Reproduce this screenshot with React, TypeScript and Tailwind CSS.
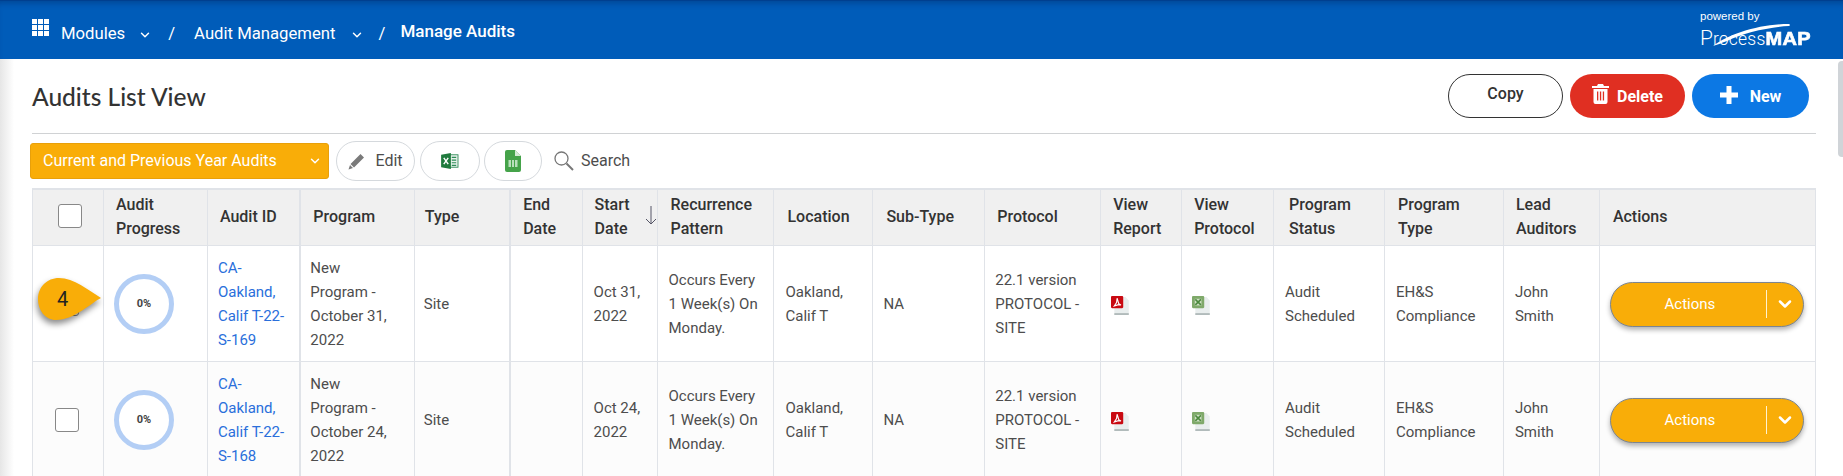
import { ChevronDown } from 'lucide-react'

const columns = [
  { label: <>&nbsp;</>, width: 71, cls: 'pl-3' },
  { label: <>Audit<br />Progress</>, width: 104, cls: 'pl-3' },
  { label: 'Audit ID', width: 93, cls: 'pl-3' },
  { label: 'Program', width: 114, cls: 'pl-3 border-l-2' },
  { label: 'Type', width: 96, cls: 'pl-[10px]' },
  { label: <>End<br />Date</>, width: 72, cls: 'pl-3 border-l-2' },
  { label: <>Start<br />Date</>, width: 75, cls: 'pl-3' },
  { label: <>Recurrence<br />Pattern</>, width: 117, cls: 'pl-[13px]' },
  { label: 'Location', width: 99, cls: 'pl-[13px]' },
  { label: 'Sub-Type', width: 112, cls: 'pl-[13px]' },
  { label: 'Protocol', width: 116, cls: 'pl-3' },
  { label: <>View<br />Report</>, width: 81, cls: 'pl-3' },
  { label: <>View<br />Protocol</>, width: 92, cls: 'pl-3' },
  { label: <>Program<br />Status</>, width: 111, cls: 'pl-[15px]' },
  { label: <>Program<br />Type</>, width: 119, cls: 'pl-[13px]' },
  { label: <>Lead<br />Auditors</>, width: 96, cls: 'pl-3' },
  { label: 'Actions', width: 216, cls: 'pl-[13px]' },
]

const audits = [
  { id: 'S-169', month: 'October 31,', start: 'Oct 31,', bg: 'bg-white' },
  { id: 'S-168', month: 'October 24,', start: 'Oct 24,', bg: 'bg-[#fcfcfc]' },
]

function FileIcon({ type }: { type: 'pdf' | 'xls' }) {
  return (
    <svg width="20" height="20" viewBox="0 0 18 18" className="translate-y-[2px]">
      <path d="M3 1h10l3 3v13H3z" fill="#e9eeee" />
      <rect x="3" y="15.500" width="13" height="1.500" fill="#aab4b4" />
      {type === 'pdf' ? (
        <>
          <rect x="0" y="0" width="11" height="11" rx="1" fill="#c90a12" />
          <path d="M5.500 2 7 7l2 1H6L3 9l2-3z" fill="none" stroke="#fff" strokeWidth="1" />
        </>
      ) : (
        <>
          <rect x="0" y="0" width="11" height="11" rx="1" fill="#7fa96a" />
          <rect x="2.500" y="2.500" width="6" height="6" fill="#cfe0c4" />
          <path d="M3 3l5 5M8 3 3 8" stroke="#4d8a3f" strokeWidth="1.400" />
        </>
      )}
    </svg>
  )
}

function Progress() {
  return (
    <div className="flex h-[60px] w-[60px] items-center justify-center rounded-full border-[5px] border-[#b3cef5] bg-white text-[11px] font-bold text-[#444]">
      0%
    </div>
  )
}

function ActionsButton() {
  return (
    <div className="flex h-[45px] w-[194px] items-center rounded-full border border-[#7c8590] bg-[#f9ad08] text-[15px] text-white shadow-[0_3px_5px_rgba(0,0,0,0.3)]">
      <span className="flex-1 pl-[3px] text-center">Actions</span>
      <span className="h-[28px] w-px bg-[#fff3d0]" />
      <span className="flex w-[36px] justify-center">
        <ChevronDown size={20} strokeWidth={3} />
      </span>
    </div>
  )
}

export default function App() {
  return (
    <div className="relative h-[476px] overflow-hidden bg-white font-['Roboto',sans-serif] text-[15px] text-[#4d4d4d]">
      {/* Top bar */}
      <header className="flex h-[59px] items-center justify-between border-t border-[#003f8f] bg-[#005cb9] pl-8 pr-[33px] text-white shadow-[inset_0_6px_6px_-4px_rgba(0,40,100,0.45)]">
        <nav className="mt-[7px] flex items-center text-[16.700px]">
          <svg width="17" height="17" viewBox="0 0 17 17" fill="#fff" className="mr-3 -translate-y-[6px]">
            <rect x="0" y="0" width="5" height="5" />
            <rect x="6" y="0" width="5" height="5" />
            <rect x="12" y="0" width="5" height="5" />
            <rect x="0" y="6" width="5" height="5" />
            <rect x="6" y="6" width="5" height="5" />
            <rect x="12" y="6" width="5" height="5" />
            <rect x="0" y="12" width="5" height="5" />
            <rect x="6" y="12" width="5" height="5" />
            <rect x="12" y="12" width="5" height="5" />
          </svg>
          <span>Modules</span>
          <ChevronDown size={14} strokeWidth={2.5} className="ml-[13px] mt-[3px]" />
          <span className="ml-[16px]">/</span>
          <span className="ml-[19px]">Audit Management</span>
          <ChevronDown size={14} strokeWidth={2.5} className="ml-[14px] mt-[3px]" />
          <span className="ml-[15px]">/</span>
          <span className="ml-[15px] -translate-y-[2px] text-[17px] font-medium">Manage Audits</span>
        </nav>
        <div className="relative h-[42px] w-[110px] pt-[2px] font-['Liberation_Sans',sans-serif] leading-none">
          <div className="text-[11.500px]">powered by</div>
          <svg width="78" height="24" viewBox="0 0 78 24" className="absolute left-[13px] top-[14px]">
            <path d="M0 23C16 11 46 1 76 1 77 1 77 3 76 3 56 4 30 10 14 18 8 20 4 22 0 23z" fill="#fff" />
          </svg>
          <div className="absolute left-0 top-[19px] flex items-baseline">
            <span className="font-['Roboto',sans-serif] text-[21px] font-light">P</span>
            <span className="font-['Roboto',sans-serif] text-[17.500px] font-light tracking-[0.2px]">rocess</span>
            <span className="origin-bottom scale-y-[0.9] text-[20px] font-bold tracking-[0.3px] [-webkit-text-stroke:0.7px_#fff]">MAP</span>
          </div>
        </div>
      </header>

      <main className="pl-8 pr-[27px]">
        {/* Title row */}
        <div className="flex h-[75px] items-center justify-between border-b border-[#d0d2d4] pb-[1px] pr-[7px]">
          <h1 className="translate-y-[2px] font-['Lato',sans-serif] text-[24.500px] font-medium text-[#333]">Audits List View</h1>
          <div className="flex gap-[7px]">
            <button className="h-[44px] w-[115px] rounded-full border border-[#333] bg-white pb-1 text-[16px] font-medium text-[#333]">Copy</button>
            <button className="flex h-[44px] w-[115px] items-center justify-center gap-2 rounded-full bg-[#e02f22] text-[16px] font-bold text-white">
              <svg width="17" height="20" viewBox="0 0 17 20" fill="#fff" className="-translate-y-[2px]">
                <path d="M6 0h5l1 2h5v2H0V2h5zM1.500 5h14v13a2 2 0 0 1-2 2h-10a2 2 0 0 1-2-2zM5 7.500v9h1.300v-9zm2.900 0v9h1.300v-9zm2.900 0v9h1.300v-9z" fillRule="evenodd" />
              </svg>
              <span className="translate-y-px">Delete</span>
            </button>
            <button className="flex h-[44px] w-[117px] items-center justify-center gap-[12px] rounded-full bg-[#0c78e4] text-[16px] font-bold text-white">
              <svg width="18" height="18" viewBox="0 0 18 18" fill="#fff" className="-translate-y-[1px]">
                <path d="M6.500 0h5v6.500H18v5h-6.500V18h-5v-6.500H0v-5h6.500z" />
              </svg>
              <span className="translate-y-px">New</span>
            </button>
          </div>
        </div>

        {/* Toolbar */}
        <div className="-ml-[2px] flex h-[54px] items-center">
          <div className="flex h-[36px] w-[299px] items-center justify-between rounded-[3px] border border-[#e8a00a] bg-[#f9ad08] pl-3 pr-[6px] text-[16px] text-white">
            <span>Current and Previous Year Audits</span>
            <ChevronDown size={14} strokeWidth={2.5} />
          </div>
          <button className="ml-[7px] flex h-[40px] w-[79px] items-center justify-center gap-[10px] rounded-full border border-[#d5d9dd] bg-white text-[16px] text-[#4d4d4d]">
            <svg width="17" height="17" viewBox="0 0 17 17" fill="#7a7a7a">
              <path d="M12.500 1 16 4.500 6 14.500 2.500 11zM2 12l3 3-4.500 1.500z" />
            </svg>
            Edit
          </button>
          <button className="ml-[5px] flex h-[40px] w-[60px] items-center justify-center rounded-full border border-[#d5d9dd] bg-white">
            <svg width="18" height="16" viewBox="0 0 20 18">
              <rect x="7" y="2" width="12" height="14" fill="#e9f3ec" stroke="#2e8b57" />
              <path d="M12 5h5M12 8h5M12 11h5M12 14h5" stroke="#2e8b57" strokeWidth="1.300" />
              <path d="M0 2 11 0v18L0 16z" fill="#1f7a3d" />
              <path d="M3 5.500 8 12.500M8 5.500 3 12.500" stroke="#fff" strokeWidth="1.600" />
            </svg>
          </button>
          <button className="ml-[4px] flex h-[40px] w-[58px] items-center justify-center rounded-full border border-[#d5d9dd] bg-white">
            <svg width="16" height="22" viewBox="0 0 16 22">
              <path d="M0 2a2 2 0 0 1 2-2h8l6 6v14a2 2 0 0 1-2 2H2a2 2 0 0 1-2-2z" fill="#45a34a" />
              <path d="M10 0l6 6h-6z" fill="#d5ead6" />
              <rect x="3.500" y="10" width="9" height="7" fill="#b9dfbc" />
              <path d="M6.500 10v7M9.500 10v7" stroke="#45a34a" />
            </svg>
          </button>
          <svg width="20" height="20" viewBox="0 0 20 20" fill="none" stroke="#777" className="ml-[12px]">
            <circle cx="7.500" cy="7.500" r="6.500" strokeWidth="1.300" />
            <path d="M12.500 12.500 19 19" strokeWidth="2" />
          </svg>
          <span className="ml-[7px] text-[16px]">Search</span>
        </div>

        {/* Audits table */}
        <table className="table-fixed border-collapse border-t-2 border-[#e0e3e8] text-left">
          <colgroup>
            {columns.map((column, i) => (
              <col key={i} style={{ width: column.width }} />
            ))}
          </colgroup>
          <thead>
            <tr className="h-[56px] bg-[#f0f0f0] text-[16px] leading-6 text-[#333]">
              {columns.map((column, i) => (
                <th key={i} className={`relative border border-[#e0e3e8] pr-1 font-medium ${column.cls}`}>
                  {i === 0 ? (
                    <span className="ml-[13px] block h-6 w-6 -translate-y-px rounded-[3px] border border-[#888] bg-white" />
                  ) : (
                    column.label
                  )}
                  {i === 6 && (
                    <svg width="12" height="19" viewBox="0 0 12 19" fill="none" stroke="#556" className="absolute right-0 top-[16px]">
                      <path d="M6 0v18M1 13l5 5 5-5" />
                    </svg>
                  )}
                </th>
              ))}
            </tr>
          </thead>
          <tbody className="leading-6">
            {audits.map((audit, row) => (
              <tr key={audit.id} className={`h-[116px] ${audit.bg} [&>td]:pt-[2px]`}>
                <td className="relative border border-[#e0e3e8] px-3">
                  <span className="ml-[10px] block h-6 w-6 rounded-[3px] border border-[#888] bg-white" />
                  {row === 0 && (
                    <div className="absolute left-[5px] top-[32px] h-[42px] w-[64px]">
                      <svg width="72" height="52" viewBox="0 0 72 52" className="absolute left-0 top-0 drop-shadow-[-1px_4px_3px_rgba(0,0,0,0.45)]">
                        <path d="M21 0C36 0 50 12 63 20 54 24 37 42 18 42 7 42 0 32 0 21 0 9 9 0 21 0z" fill="#f9ad08" />
                      </svg>
                      <span className="absolute left-[19px] top-[9px] text-[20px] leading-6 text-[#222]">4</span>
                    </div>
                  )}
                </td>
                <td className="border border-[#e0e3e8] pl-[10px]"><Progress /></td>
                <td className="border border-[#e0e3e8] pl-[10px] pr-1 text-[#2a6fdb]">CA-<br />Oakland,<br />Calif T-22-<br />{audit.id}</td>
                <td className="border border-l-2 border-[#e0e3e8] pl-[9px] pr-1">New<br />Program -<br />{audit.month}<br />2022</td>
                <td className="border border-[#e0e3e8] pl-[9px]">Site</td>
                <td className="border border-l-2 border-[#e0e3e8]" />
                <td className="border border-[#e0e3e8] pl-[11px]">{audit.start}<br />2022</td>
                <td className="border border-[#e0e3e8] pl-[11px] pr-1">Occurs Every<br />1 Week(s) On<br />Monday.</td>
                <td className="border border-[#e0e3e8] pl-[11px]">Oakland,<br />Calif T</td>
                <td className="border border-[#e0e3e8] px-[10px]">NA</td>
                <td className="border border-[#e0e3e8] pl-[10px] pr-1">22.1 version<br />PROTOCOL -<br />SITE</td>
                <td className="border border-[#e0e3e8] px-[10px]"><FileIcon type="pdf" /></td>
                <td className="border border-[#e0e3e8] px-[10px]"><FileIcon type="xls" /></td>
                <td className="border border-[#e0e3e8] pl-[11px]">Audit<br />Scheduled</td>
                <td className="border border-[#e0e3e8] pl-[11px]">EH&amp;S<br />Compliance</td>
                <td className="border border-[#e0e3e8] pl-[11px]">John<br />Smith</td>
                <td className="border border-[#e0e3e8] pl-[10px]"><ActionsButton /></td>
              </tr>
            ))}
          </tbody>
        </table>
      </main>

      {/* Page edge shadow and scrollbar */}
      <div className="absolute bottom-0 left-0 top-[59px] w-[14px] bg-gradient-to-r from-[#e6e6e6] to-transparent" />
      <div className="absolute right-0 top-[61px] h-[96px] w-[5px] rounded-l bg-[#d0d4d8]" />
    </div>
  )
}
